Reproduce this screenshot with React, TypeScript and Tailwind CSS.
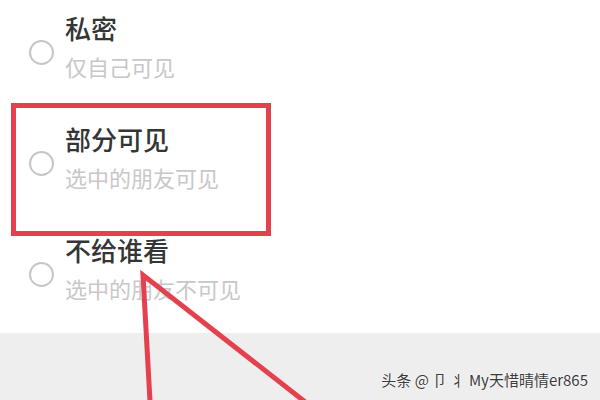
import React from "react";

const options = [
  { title: "私密", desc: "仅自己可见" },
  { title: "部分可见", desc: "选中的朋友可见" },
  { title: "不给谁看", desc: "选中的朋友不可见" },
];

const cjk = { fontFamily: '"Noto Sans CJK SC", "Noto Sans", sans-serif' };

export default function App() {
  return (
    <div className="relative w-[600px] h-[400px] overflow-hidden bg-white" style={cjk}>
      <div className="flex flex-col h-[333px] bg-white">
        {options.map((o) => (
          <div key={o.title} className="flex items-start h-[112px] pt-[12px]">
            <div className="ml-[29px] mt-[28px] w-[25px] h-[25px] rounded-full border-2 border-[#c6c6c6] shrink-0" />
            <div className="ml-[11px] flex flex-col gap-[8px]">
              <div className="text-[26px] leading-[32px] font-medium text-[#353535]">{o.title}</div>
              <div className="text-[22px] leading-[28px] text-[#c8c8c8]">{o.desc}</div>
            </div>
          </div>
        ))}
      </div>
      <div className="h-[67px] bg-[#eeeeee] flex items-end justify-end pr-[12px] pb-[10px]">
        <span
          className="text-[15px] leading-[20px] text-[#3a3a3a]"
          style={{ textShadow: "0 0 2px #ffffff, 0 0 1px #ffffff" }}
        >
          头条 @ 卩 丬 My天惜晴情er865
        </span>
      </div>

      {/* highlight box around the second option */}
      <div className="absolute left-[11px] top-[103px] w-[260px] h-[133px] border-[5px] border-[#e5404d]" />

      {/* pointer arrow */}
      <svg className="absolute inset-0" width="600" height="400" viewBox="0 0 600 400">
        <polyline
          points="150.6,412 143,275 318,412"
          fill="none"
          stroke="#e5404d"
          strokeWidth="5"
          strokeLinejoin="miter"
          strokeMiterlimit="20"
        />
      </svg>
    </div>
  );
}
